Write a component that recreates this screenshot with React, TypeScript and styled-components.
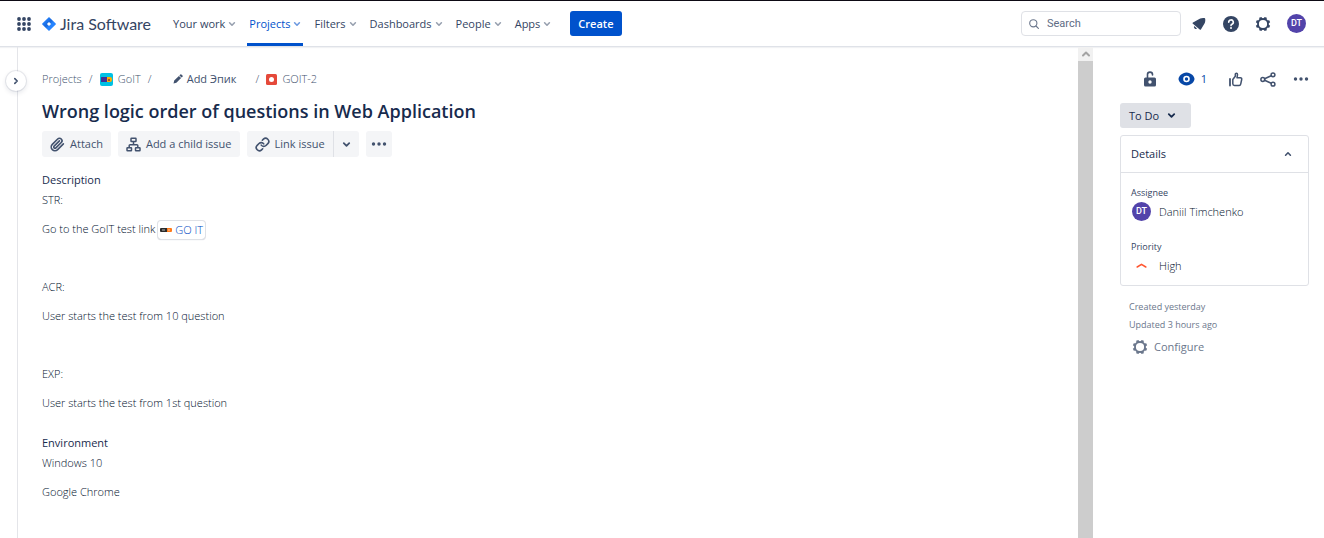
import React from "react";
import styled, { createGlobalStyle, css } from "styled-components";

const Global = createGlobalStyle`
  *, *::before, *::after { box-sizing: border-box; }
  body { margin: 0; background: #fff; color: #172b4d; font: 300 11px/20px "Open Sans", "Noto Sans", sans-serif; }
  button, input, select { font: inherit; color: inherit; margin: 0; }
  button { border: 0; background: none; padding: 0; cursor: pointer; }
  a { color: inherit; text-decoration: none; }
  h1, h2, p, dl, dd, ol { margin: 0; padding: 0; }
  svg { display: block; flex: none; }
`;

const Page = styled.div`
  min-height: 100vh;
  display: flex;
  flex-direction: column;
`;

const Header = styled.header`
  height: 47px;
  flex: none;
  display: flex;
  align-items: stretch;
  padding: 0 18px 0 16px;
  border-top: 1px solid #0d0a14;
  border-bottom: 1px solid #dfe2e8;
  box-shadow: 0 1px 1px #f1f2f4;
  color: #344563;
`;

const HeaderGroup = styled.div`
  display: flex;
  align-items: center;
`;

const Logo = styled.a`
  display: flex;
  align-items: center;
  gap: 4px;
  margin: 0 20px 0 10px;
  font: 16px/20px Lato, sans-serif;
  color: #344563;
`;

const Nav = styled.nav`
  display: flex;
  gap: 9px;
`;

const NavButton = styled.button<{ $active?: boolean }>`
  display: flex;
  align-items: center;
  gap: 3px;
  padding: 3px 2px 0;
  border-bottom: 3px solid transparent;
  font-weight: 500;
  svg { color: #97a0af; }
  ${(p) => p.$active && css`
    color: #0052cc;
    border-color: #0052cc;
    svg { color: #6d9ae0; }
  `}
`;

const CreateButton = styled.button`
  align-self: center;
  height: 25px;
  margin-left: 17px;
  padding: 0 8px;
  border-radius: 3px;
  background: #0052cc;
  color: #fff;
  font-weight: 600;
`;

const SearchBox = styled.label`
  display: flex;
  align-items: center;
  gap: 8px;
  width: 160px;
  height: 25px;
  padding: 0 7px;
  border: 1px solid #dfe1e6;
  border-radius: 4px;
  color: #6b778c;
  input {
    flex: 1;
    min-width: 0;
    border: 0;
    padding: 0;
    outline: 0;
    background: none;
    font: 11px/16px Roboto, sans-serif;
  }
  input::placeholder { color: #5e6c84; opacity: 1; }
`;

const HeaderTools = styled(HeaderGroup)`
  margin-left: auto;
  gap: 16px;
`;

const SearchGroup = styled(HeaderGroup)`
  gap: 10px;
`;

const IconButton = styled.button`
  display: flex;
  align-items: center;
  justify-content: center;
  min-width: 16px;
  height: 20px;
  color: #344563;
`;

const Avatar = styled.span`
  display: flex;
  align-items: center;
  justify-content: center;
  width: 19px;
  height: 19px;
  border-radius: 50%;
  background: #5243aa;
  color: #fff;
  font: 500 9px/19px Roboto, sans-serif;
`;

const Body = styled.div`
  flex: 1;
  display: flex;
`;

const Rail = styled.aside`
  position: relative;
  flex: none;
  width: 18px;
  border-right: 1px solid #e4e5e9;
`;

const ExpandButton = styled.button`
  position: absolute;
  top: 24px;
  left: 6px;
  width: 20px;
  height: 20px;
  display: flex;
  align-items: center;
  justify-content: center;
  border-radius: 50%;
  background: #fff;
  color: #42526e;
  box-shadow: 0 0 0 1px rgba(9, 30, 66, 0.08), 0 2px 4px 1px rgba(9, 30, 66, 0.08);
`;

const Main = styled.main`
  flex: 1;
  min-width: 0;
  padding: 22px 24px 24px;
`;

const Crumbs = styled.ol`
  list-style: none;
  display: flex;
  align-items: center;
  color: #42526e;
  li { display: flex; align-items: center; }
  li + li::before { content: "/"; width: 18px; text-align: center; }
  a { display: flex; align-items: center; gap: 5px; }
`;

const EpicButton = styled.button`
  display: flex;
  align-items: center;
  gap: 4px;
  margin: 0 12px 0 14px;
  color: #42526e;
  font-weight: 500;
`;

const Title = styled.h1`
  margin: 10px 0 7px;
  font-size: 18px;
  line-height: 25px;
  font-weight: 600;
`;

const Actions = styled.div`
  display: flex;
  gap: 7px;
`;

const Split = styled.div`
  display: flex;
  gap: 1px;
`;

const ActionButton = styled.button`
  display: flex;
  align-items: center;
  justify-content: center;
  gap: 5px;
  height: 26px;
  min-width: 25px;
  padding: 0 8px;
  border-radius: 3px;
  background: #f4f5f7;
  color: #42526e;
  font-weight: 500;
  ${Split} &:first-child { border-radius: 3px 0 0 3px; box-shadow: 1px 0 #dfe1e6; }
  ${Split} &:last-child { border-radius: 0 3px 3px 0; }
`;

const IconAction = styled(ActionButton)`
  padding: 0 5px;
`;

const Section = styled.section`
  margin-top: 13px;
  & + & { margin-top: 20px; }
`;

const SectionTitle = styled.h2`
  font-size: 11px;
  line-height: 20px;
  font-weight: 500;
`;

const Text = styled.div`
  display: flex;
  flex-direction: column;
  gap: 9px;
  color: #02112e;
  p { height: 20px; }
`;

const SmartLink = styled.a`
  display: inline-flex;
  align-items: center;
  gap: 3px;
  height: 18px;
  padding: 0 2px;
  border-radius: 3px;
  box-shadow: 0 0 0 1px #dfe1e6, 0 1px 1px #c1c7d0;
  color: #0047c2;
  vertical-align: middle;
`;

const ScrollTrack = styled.div`
  flex: none;
  width: 15px;
  background: #cdcdcd;
`;

const ScrollArrow = styled.button`
  display: flex;
  align-items: center;
  justify-content: center;
  width: 15px;
  height: 14px;
  background: #f1f1f1;
  color: #a3a3a3;
`;

const Side = styled.aside`
  flex: none;
  width: 231px;
  padding: 22px 15px 20px 27px;
`;

const SideTools = styled.div`
  display: flex;
  justify-content: flex-end;
  align-items: center;
  gap: 17px;
  button { color: #42526e; }
`;

const WatchButton = styled(IconButton)`
  gap: 6px;
  margin: 0 3px 0 3px;
  font-weight: 400;
  && { color: #0747a6; }
`;

const StatusButton = styled.button`
  display: flex;
  align-items: center;
  gap: 8px;
  height: 25px;
  margin: 14px 0 7px;
  padding: 0 15px 0 9px;
  border-radius: 3px;
  background: #dfe1e6;
  font-weight: 500;
`;

const Card = styled.section`
  border: 1px solid #dfe1e6;
  border-radius: 3px;
`;

const CardHeader = styled.button`
  display: flex;
  align-items: center;
  justify-content: space-between;
  width: 100%;
  height: 37px;
  padding: 0 16px 0 10px;
  border-bottom: 1px solid #dfe1e6;
  font-weight: 500;
  svg { color: #42526e; }
`;

const Fields = styled.dl`
  padding: 11px 10px 9px;
  color: #02112e;
  dt { font-size: 9px; line-height: 17px; font-weight: 500; color: #344563; }
  dd { display: flex; align-items: center; gap: 8px; height: 21px; padding-left: 1px; }
  dd + dt { margin-top: 16px; }
`;

const FieldIcon = styled.span`
  width: 19px;
  display: flex;
  justify-content: center;
`;

const Meta = styled.div`
  padding: 12px 9px 0;
  color: #6b778c;
  font-size: 9px;
  line-height: 18px;
  font-weight: 400;
`;

const Configure = styled.button`
  display: flex;
  align-items: center;
  gap: 6px;
  height: 26px;
  padding-left: 3px;
  font-size: 11px;
  font-weight: 500;
`;

const Chevron = ({ dir = "down", size = 8, w = 2 }: { dir?: "down" | "up" | "right"; size?: number; w?: number }) => (
  <svg width={size} height={size} viewBox="0 0 10 10" fill="none" stroke="currentColor" strokeWidth={w} strokeLinecap="round" strokeLinejoin="round" aria-hidden="true">
    <path d={{ down: "M2 3.5 5 6.5 8 3.5", up: "M2 6.5 5 3.5 8 6.5", right: "M3.5 2 6.5 5 3.5 8" }[dir]} />
  </svg>
);

const Dots = () => (
  <svg width="16" height="6" viewBox="0 0 16 6" fill="currentColor" aria-hidden="true">
    <circle cx="2.5" cy="3" r="1.7" /><circle cx="8" cy="3" r="1.7" /><circle cx="13.5" cy="3" r="1.7" />
  </svg>
);

const Gear = () => (
  <svg width="16" height="16" viewBox="0 0 16 16" aria-hidden="true">
    <circle cx="8" cy="8" r="5" fill="none" stroke="currentColor" strokeWidth="1.8" />
    <g fill="currentColor">
      {[22.5, 67.5, 112.5, 157.5, 202.5, 247.5, 292.5, 337.5].map((a) => (
        <path key={a} d="M6.3 3 6.8.8h2.400l.5 2.200z" transform={`rotate(${a} 8 8)`} />
      ))}
    </g>
  </svg>
);

const Grid = () => (
  <svg width="16" height="16" viewBox="0 0 16 16" fill="currentColor" aria-hidden="true">
    {[3, 8, 13].map((y) => [3, 8, 13].map((x) => <circle key={`${x}-${y}`} cx={x} cy={y} r="1.9" />))}
  </svg>
);

const JiraMark = () => (
  <svg width="14" height="14" viewBox="0 0 14 14" aria-hidden="true">
    <defs>
      <linearGradient id="jira" x1="0" y1="0" x2="1" y2="1">
        <stop offset="0.2" stopColor="#2684ff" /><stop offset="0.45" stopColor="#1868db" /><stop offset="0.6" stopColor="#2684ff" />
      </linearGradient>
    </defs>
    <path fill="url(#jira)" fillRule="evenodd" d="M7 0 13.7 6.6a.6.6 0 0 1 0 .8L7 14 .3 7.4a.6.6 0 0 1 0-.8zM7 4.9 4.9 7 7 9.1 9.1 7z" />
  </svg>
);

export default function App() {
  return (
    <Page>
      <Global />
      <Header>
        <HeaderGroup>
          <IconButton aria-label="Switch to"><Grid /></IconButton>
          <Logo href="#"><JiraMark />Jira Software</Logo>
        </HeaderGroup>
        <Nav>
          {["Your work", "Projects", "Filters", "Dashboards", "People", "Apps"].map((n) => (
            <NavButton key={n} $active={n === "Projects"}>{n}<Chevron /></NavButton>
          ))}
        </Nav>
        <CreateButton>Create</CreateButton>
        <HeaderTools>
          <SearchGroup>
            <SearchBox>
              <svg width="10" height="10" viewBox="0 0 10 10" fill="none" stroke="currentColor" strokeWidth="1.1" strokeLinecap="round" aria-hidden="true">
                <circle cx="4.3" cy="4.3" r="3.6" /><path d="m7 7 2.4 2.4" />
              </svg>
              <input placeholder="Search" aria-label="Search" />
            </SearchBox>
            <IconButton aria-label="Notifications">
              <svg width="14" height="14" viewBox="0 0 14 14" fill="currentColor" aria-hidden="true">
                <path d="M8.2 1.500C9.500.9 12 .7 13 1.300c.5 1 .4 3.400-.2 4.800L8.900 12.400c-.3.500-.8.500-1.200.1L.9 6.700c-.500-.4-.4-.9.1-1.200z" />
                <path d="M2.100 8.900a2.100 2.100 0 0 0 3 2.700z" />
              </svg>
            </IconButton>
          </SearchGroup>
          <IconButton aria-label="Help">
            <svg width="16" height="16" viewBox="0 0 16 16" aria-hidden="true">
              <circle cx="8" cy="8" r="8" fill="currentColor" />
              <path d="M5.700 6.200a2.300 2.300 0 1 1 3.300 2.100c-.7.350-1 .6-1 1.300" fill="none" stroke="#fff" strokeWidth="1.600" strokeLinecap="round" />
              <circle cx="8" cy="12" r="1" fill="#fff" />
            </svg>
          </IconButton>
          <IconButton aria-label="Settings"><Gear /></IconButton>
          <IconButton aria-label="Your profile"><Avatar>DT</Avatar></IconButton>
        </HeaderTools>
      </Header>
      <Body>
        <Rail><ExpandButton aria-label="Expand sidebar"><Chevron dir="right" size={8} /></ExpandButton></Rail>
        <Main>
          <Crumbs>
            <li><a href="#">Projects</a></li>
            <li>
              <a href="#">
                <svg width="13" height="13" viewBox="0 0 13 13" aria-hidden="true">
                  <rect width="13" height="13" rx="2" fill="#00c1e4" />
                  <rect x="1" y="4" width="7" height="5" rx=".5" fill="#403294" />
                  <path d="M7 4h3a2 2 0 0 1 2 2v1a2 2 0 0 1-2 2H7z" fill="#ffab00" />
                  <path d="M8 6h2v2H8z" fill="#a5512a" />
                </svg>
                GoIT
              </a>
            </li>
            <li>
              <EpicButton>
                <svg width="10" height="10" viewBox="0 0 10 10" fill="currentColor" aria-hidden="true">
                  <path d="M7.300.5a.8.8 0 0 1 1.100 0l1.100 1.100a.8.8 0 0 1 0 1.100l-.9.900-2.200-2.200zM5.900 1.900l2.200 2.200-4.700 4.700L.5 9.500l.7-2.900z" />
                </svg>
                Add Эпик
              </EpicButton>
            </li>
            <li>
              <a href="#">
                <svg width="11" height="11" viewBox="0 0 11 11" aria-hidden="true">
                  <rect width="11" height="11" rx="1.500" fill="#e5493a" /><circle cx="5.500" cy="5.500" r="2.500" fill="#fff" />
                </svg>
                GOIT-2
              </a>
            </li>
          </Crumbs>
          <Title>Wrong logic order of questions in Web Application</Title>
          <Actions>
            <ActionButton>
              <svg width="15" height="15" viewBox="0 0 24 24" fill="none" stroke="currentColor" strokeWidth="2.600" strokeLinecap="round" strokeLinejoin="round" aria-hidden="true">
                <path d="m21.400 11.050-9.190 9.190a6 6 0 0 1-8.490-8.490l8.570-8.570A4 4 0 1 1 18 8.840l-8.590 8.570a2 2 0 0 1-2.830-2.830l8.490-8.480" />
              </svg>
              Attach
            </ActionButton>
            <ActionButton>
              <svg width="15" height="15" viewBox="0 0 15 15" fill="none" stroke="currentColor" strokeWidth="1.500" strokeLinejoin="round" aria-hidden="true">
                <rect x="5" y="1.200" width="5" height="3.300" rx=".5" />
                <rect x="1" y="10.800" width="4.500" height="3" rx=".5" />
                <rect x="9.500" y="10.800" width="4.500" height="3" rx=".5" />
                <path d="M7.500 4.500v3.200M3.200 10.800V8.600q0-.9.9-.9h6.800q.9 0 .9.900v2.200" />
              </svg>
              Add a child issue
            </ActionButton>
            <Split>
              <ActionButton>
                <svg width="15" height="15" viewBox="0 0 24 24" fill="none" stroke="currentColor" strokeWidth="2.600" strokeLinecap="round" strokeLinejoin="round" aria-hidden="true">
                  <path d="M10 13a5 5 0 0 0 7.540.540l3-3a5 5 0 0 0-7.070-7.070l-1.720 1.710" />
                  <path d="M14 11a5 5 0 0 0-7.540-.540l-3 3a5 5 0 0 0 7.070 7.070l1.710-1.710" />
                </svg>
                Link issue
              </ActionButton>
              <ActionButton aria-label="Link options"><Chevron size={9} /></ActionButton>
            </Split>
            <IconAction aria-label="More actions"><Dots /></IconAction>
          </Actions>
          <Section>
            <SectionTitle>Description</SectionTitle>
            <Text>
              <p>STR:</p>
              <p>
                Go to the GoIT test link{" "}
                <SmartLink href="#">
                  <svg width="12" height="6" viewBox="0 0 12 6" aria-hidden="true">
                    <path d="M1 1h6v4H1a1 1 0 0 1-1-1V2a1 1 0 0 1 1-1z" fill="#2b2b2b" />
                    <path d="M2 3h3" stroke="#bbb" />
                    <path d="M7 1h4a1 1 0 0 1 1 1v2a1 1 0 0 1-1 1H7z" fill="#ff7a1a" />
                    <path d="M8 3h2" stroke="#ffd0a8" />
                  </svg>
                  GO IT
                </SmartLink>
              </p>
              <p />
              <p>ACR:</p>
              <p>User starts the test from 10 question</p>
              <p />
              <p>EXP:</p>
              <p>User starts the test from 1st question</p>
            </Text>
          </Section>
          <Section>
            <SectionTitle>Environment</SectionTitle>
            <Text>
              <p>Windows 10</p>
              <p>Google Chrome</p>
            </Text>
          </Section>
        </Main>
        <ScrollTrack><ScrollArrow aria-label="Scroll up"><Chevron dir="up" size={10} /></ScrollArrow></ScrollTrack>
        <Side>
          <SideTools>
            <IconButton aria-label="Restrictions">
              <svg width="12" height="16" viewBox="0 0 12 16" aria-hidden="true">
                <path d="M3.500 7V3.600a2.500 2.500 0 0 1 5 0V4" fill="none" stroke="currentColor" strokeWidth="1.600" strokeLinecap="round" />
                <path fill="currentColor" fillRule="evenodd" d="M1.500 6.500h9A1.500 1.500 0 0 1 12 8v6a1.500 1.500 0 0 1-1.500 1.500h-9A1.500 1.500 0 0 1 0 14V8a1.500 1.500 0 0 1 1.500-1.500zM6 9.300a1.700 1.700 0 1 0 0 3.400 1.700 1.700 0 0 0 0-3.400z" />
              </svg>
            </IconButton>
            <WatchButton aria-label="Watchers: 1">
              <svg width="17" height="14" viewBox="0 0 17 14" aria-hidden="true">
                <path fill="currentColor" d="M8.500.5C13 .5 16.500 4.500 16.500 7s-3.500 6.500-8 6.500S.5 9.500.5 7 4 .5 8.500.5z" />
                <circle cx="8.500" cy="7" r="2.500" fill="currentColor" stroke="#fff" strokeWidth="1.600" />
              </svg>
              1
            </WatchButton>
            <IconButton aria-label="Vote">
              <svg width="15" height="15" viewBox="0 0 15 15" fill="none" stroke="currentColor" strokeWidth="1.500" strokeLinejoin="round" strokeLinecap="round" aria-hidden="true">
                <path d="M2 7v6.500" strokeWidth="1.800" />
                <path d="M4.800 7.500 7.300 4.200V2.400c0-1.600 2.200-1.400 2.200.2L9 5.800h3.400c1 0 1.500.8 1.300 1.700l-1 4.600c-.2.900-.7 1.300-1.500 1.300H6.500c-1 0-1.700-.6-1.700-1.600z" />
              </svg>
            </IconButton>
            <IconButton aria-label="Share">
              <svg width="16" height="15" viewBox="0 0 16 15" fill="none" stroke="currentColor" strokeWidth="1.500" aria-hidden="true">
                <circle cx="2.800" cy="7.500" r="1.900" /><circle cx="13" cy="2.800" r="1.900" /><circle cx="13" cy="12.200" r="1.900" />
                <path d="m4.600 6.700 6.600-3M4.600 8.300l6.600 3" />
              </svg>
            </IconButton>
            <IconButton aria-label="Actions"><Dots /></IconButton>
          </SideTools>
          <StatusButton>To Do<Chevron size={9} /></StatusButton>
          <Card>
            <CardHeader aria-expanded="true">Details<Chevron dir="up" size={8} /></CardHeader>
            <Fields>
              <dt>Assignee</dt>
              <dd><Avatar>DT</Avatar>Daniil Timchenko</dd>
              <dt>Priority</dt>
              <dd>
                <FieldIcon>
                  <svg width="11" height="5" viewBox="0 0 11 5" fill="none" stroke="#ff5630" strokeWidth="1.500" strokeLinecap="round" strokeLinejoin="round" aria-hidden="true">
                    <path d="M1.200 4 5.500 1.300 9.800 4" />
                  </svg>
                </FieldIcon>
                High
              </dd>
            </Fields>
          </Card>
          <Meta>
            <p>Created yesterday</p>
            <p>Updated 3 hours ago</p>
            <Configure><Gear />Configure</Configure>
          </Meta>
        </Side>
      </Body>
    </Page>
  );
}
